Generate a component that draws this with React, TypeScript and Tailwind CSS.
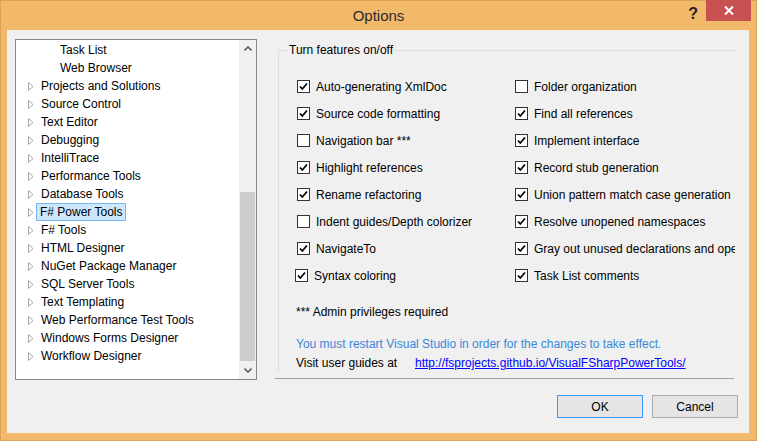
import React from 'react';

const treeItems: { label: string; child?: boolean; selected?: boolean }[] = [
  { label: 'Task List', child: true },
  { label: 'Web Browser', child: true },
  { label: 'Projects and Solutions' },
  { label: 'Source Control' },
  { label: 'Text Editor' },
  { label: 'Debugging' },
  { label: 'IntelliTrace' },
  { label: 'Performance Tools' },
  { label: 'Database Tools' },
  { label: 'F# Power Tools', selected: true },
  { label: 'F# Tools' },
  { label: 'HTML Designer' },
  { label: 'NuGet Package Manager' },
  { label: 'SQL Server Tools' },
  { label: 'Text Templating' },
  { label: 'Web Performance Test Tools' },
  { label: 'Windows Forms Designer' },
  { label: 'Workflow Designer' },
];

const features: [string, boolean, string, boolean][] = [
  ['Auto-generating XmlDoc', true, 'Folder organization', false],
  ['Source code formatting', true, 'Find all references', true],
  ['Navigation bar ***', false, 'Implement interface', true],
  ['Highlight references', true, 'Record stub generation', true],
  ['Rename refactoring', true, 'Union pattern match case generation', true],
  ['Indent guides/Depth colorizer', false, 'Resolve unopened namespaces', true],
  ['NavigateTo', true, 'Gray out unused declarations and operators', true],
  ['Syntax coloring', true, 'Task List comments', true],
];

const Expander = () => (
  <svg width="6" height="9" viewBox="0 0 6 9" className="shrink-0">
    <path d="M0.5 0.5 L5 4.5 L0.5 8.5 Z" fill="none" stroke="#a6a6a6" strokeWidth="1" />
  </svg>
);

const Checkbox = ({ checked }: { checked: boolean }) => (
  <div className="w-[13px] h-[13px] shrink-0 border border-[#333333] bg-white flex items-center justify-center">
    {checked && (
      <svg width="9" height="9" viewBox="0 0 9 9">
        <path d="M1 4.5 L3.3 7 L8 1.5" fill="none" stroke="#000" strokeWidth="1.8" />
      </svg>
    )}
  </div>
);

const Feature = ({ label, checked, shift }: { label: string; checked: boolean; shift?: boolean }) => (
  <div className={`flex items-center h-[27px] gap-[6px] whitespace-nowrap overflow-hidden ${shift ? 'ml-[-2px]' : ''}`}>
    <Checkbox checked={checked} />
    <span>{label}</span>
  </div>
);

const App = () => {
  return (
    <div
      className="w-[757px] h-[441px] bg-[#f2b96b] border border-[#d9a255] flex flex-col text-[12px] text-[#000]"
      style={{ fontFamily: '"Liberation Sans", Arial, sans-serif' }}
    >
      {/* title bar */}
      <div className="h-[29px] flex items-start relative">
        <div className="flex-1 text-center text-[15px] text-[#2b2b2b] pt-[4px]">Options</div>
        <div className="absolute right-[5px] top-[-1px] flex items-start">
          <span className="text-[16px] font-bold text-[#222] mr-[8px] mt-[2px]">?</span>
          <div className="w-[45px] h-[21px] bg-[#c75050] flex items-center justify-center">
            <svg width="10" height="9" viewBox="0 0 10 9">
              <path d="M1 0.5 L9 8.5 M9 0.5 L1 8.5" stroke="#fff" strokeWidth="2" />
            </svg>
          </div>
        </div>
      </div>

      {/* client area */}
      <div className="ml-[6px] mr-[7px] h-[403px] bg-[#f0f0f0] flex flex-col">
        <div className="flex">
          {/* tree */}
          <div className="ml-[8px] mt-[9px] w-[242px] h-[341px] border border-[#828790] bg-white flex">
            <div className="flex-1 flex flex-col pt-[1px]">
              {treeItems.map((it) => (
                <div key={it.label} className="h-[18px] flex items-center whitespace-nowrap">
                  {it.child ? (
                    <span className="ml-[43px] px-[1px]">{it.label}</span>
                  ) : (
                    <>
                      <div className="ml-[12px] w-[12px]">
                        <Expander />
                      </div>
                      <span
                        className={
                          it.selected
                            ? 'bg-[#cce8ff] border border-[#7bb6ec] px-[3px] -ml-[4px] h-[18px] flex items-center'
                            : 'px-[1px]'
                        }
                      >
                        {it.label}
                      </span>
                    </>
                  )}
                </div>
              ))}
            </div>
            {/* scrollbar */}
            <div className="w-[17px] bg-[#f0f0f0] flex flex-col items-center">
              <div className="h-[17px] w-full flex items-center justify-center">
                <svg width="8" height="5" viewBox="0 0 8 5">
                  <path d="M0.5 4.5 L4 1 L7.5 4.5" fill="none" stroke="#606060" strokeWidth="1.6" />
                </svg>
              </div>
              <div className="flex-1 w-full flex flex-col px-[1px]">
                <div className="h-[135px]" />
                <div className="h-[169px] bg-[#cdcdcd]" />
              </div>
              <div className="h-[17px] w-full flex items-center justify-center">
                <svg width="8" height="5" viewBox="0 0 8 5">
                  <path d="M0.5 0.5 L4 4 L7.5 0.5" fill="none" stroke="#606060" strokeWidth="1.6" />
                </svg>
              </div>
            </div>
          </div>

          {/* right panel */}
          <div className="ml-[18px] w-[460px] flex flex-col">
            <div className="mt-[20px] ml-[3px] h-[322px] border-l border-t border-[#dcdcdc] flex flex-col relative">
              <span className="absolute top-[-9px] left-[9px] bg-[#f0f0f0] px-[1px] leading-[16px]">Turn features on/off</span>
              <div className="mt-[22px] ml-[18px] grid grid-cols-[218px_220px]">
                {features.map(([l, lc, r, rc], i) => (
                  <React.Fragment key={l}>
                    <Feature label={l} checked={lc} shift={i === 7} />
                    <Feature label={r} checked={rc} />
                  </React.Fragment>
                ))}
              </div>
              <div className="ml-[17px] mt-[14px]">*** Admin privileges required</div>
              <div className="ml-[17px] mt-[14px] text-[#3a87d6]">
                You must restart Visual Studio in order for the changes to take effect.
              </div>
              <div className="ml-[17px] mt-[1px] flex">
                <span className="w-[119px]">Visit user guides at</span>
                <span className="text-[#0000ff] underline">http://fsprojects.github.io/VisualFSharpPowerTools/</span>
              </div>
            </div>
            <div className="mt-[6px] w-[459px] h-px bg-[#a0a0a0]" />
          </div>
        </div>

        {/* buttons */}
        <div className="flex justify-end gap-[9px] mr-[11px] mt-[15px]">
          <button className="w-[86px] h-[23px] border border-[#3399ff] bg-[#e5e5e5] text-[12px]">OK</button>
          <button className="w-[86px] h-[23px] border border-[#acacac] bg-[#e5e5e5] text-[12px]">Cancel</button>
        </div>
      </div>
    </div>
  );
};

export default App;
